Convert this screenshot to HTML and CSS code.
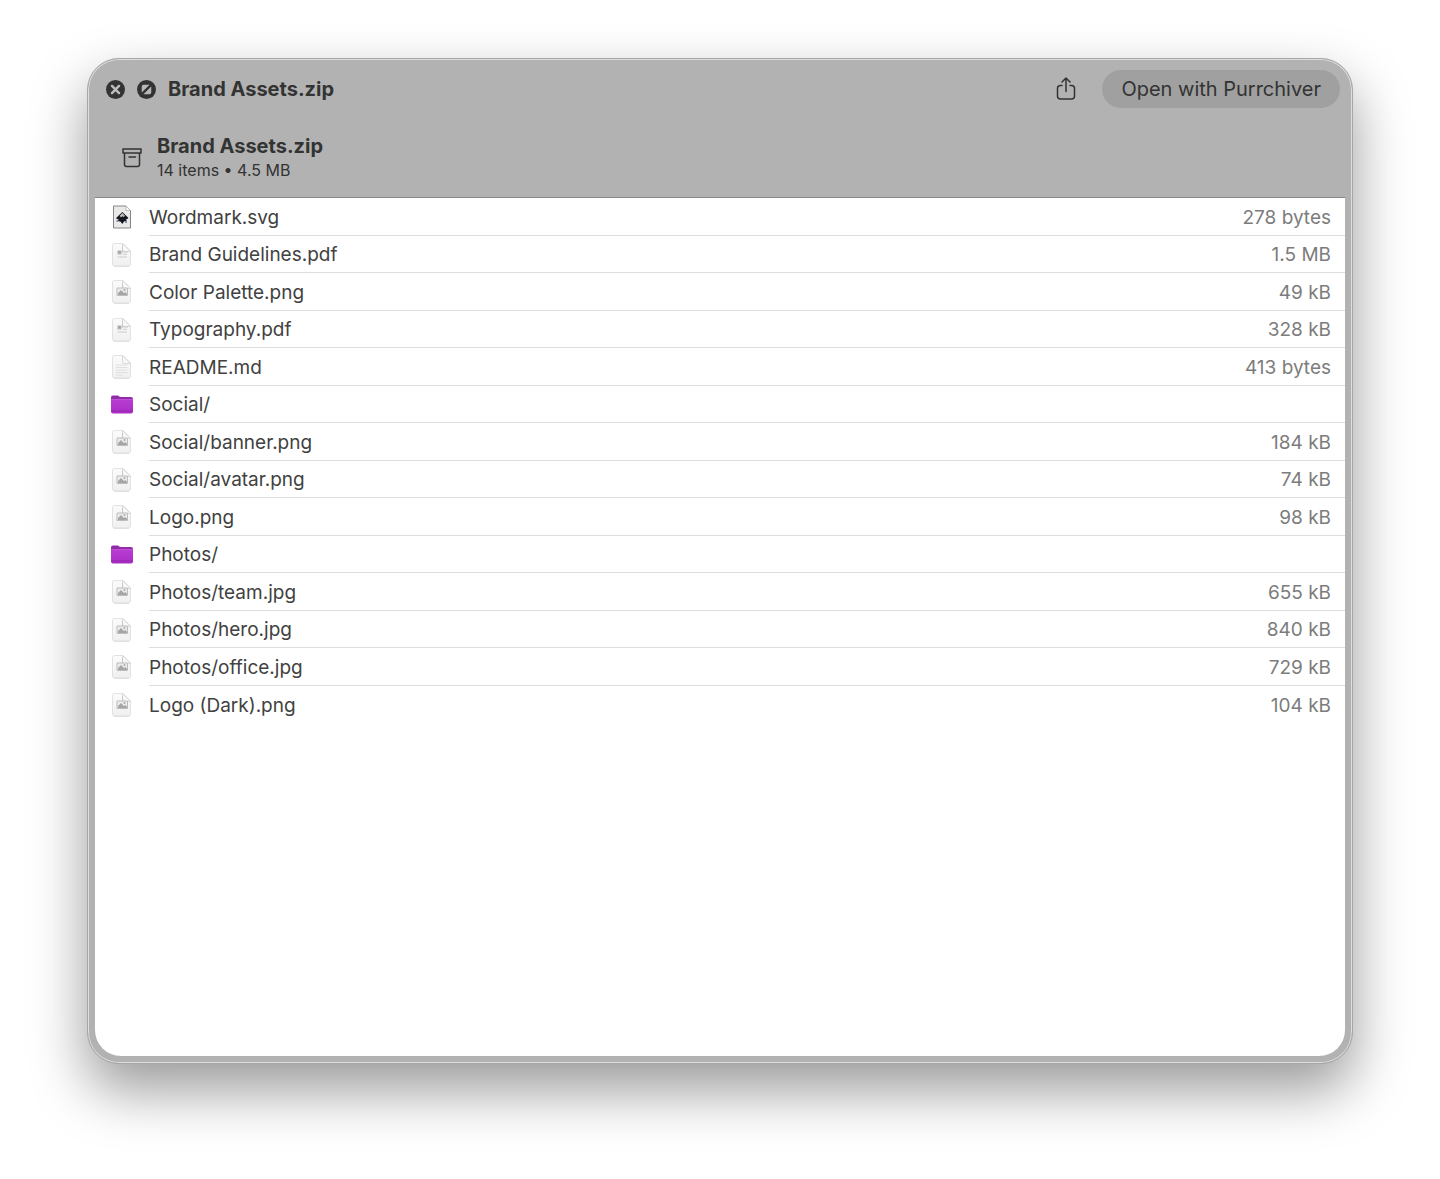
FILE: index.html
```html
<!DOCTYPE html>
<html lang="en">
<head>
<meta charset="utf-8">
<meta name="viewport" content="width=device-width, initial-scale=1">
<title>Brand Assets.zip</title>
<link rel="stylesheet" href="styles.css">
</head>
<body>
<svg class="symbols" aria-hidden="true">
  <defs>
    <linearGradient id="paper" x1="0" y1="0" x2="0" y2="1"><stop offset="0" stop-color="#fbfbfb"/><stop offset="1" stop-color="#f0f0f0"/></linearGradient>
    <linearGradient id="purple" x1="0" y1="0" x2="0" y2="1"><stop offset="0" stop-color="#b93dd3"/><stop offset="1" stop-color="#a92cc4"/></linearGradient>
    <symbol id="page" viewBox="0 0 24 26">
      <path d="M4.500 1.500h8.500l7.500 7.500v13a2 2 0 0 1-2 2h-14a2 2 0 0 1-2-2v-18.500a2 2 0 0 1 2-2z" fill="url(#paper)" stroke="#e2e2e2"/>
      <path d="M12.500 1.500v6a2 2 0 0 0 2 2h6z" fill="#f8f8f8" stroke="#d8d8d8"/>
      <path d="M4 24.300h15" stroke="#d4d4d4" stroke-width=".7"/>
    </symbol>
    <symbol id="pdf" viewBox="0 0 24 26">
      <use href="#page"/>
      <path d="M7.500 8.500h4v4h-4z" fill="#b5b5b5"/>
      <path d="M12.500 4v6.500M12 10h6M13 12.300h4M7.500 15h9.500" stroke="#cacaca" fill="none"/>
      <path d="M8.500 10h2" stroke="#929292"/>
    </symbol>
    <symbol id="image" viewBox="0 0 24 26">
      <use href="#page"/>
      <path d="M12.500 4v5" stroke="#c8c8c8"/>
      <path d="M7 9h10.500v7.500h-10.500z" fill="#ececec" stroke="#bcbcbc"/>
      <path d="M8 16v-2l3-3 3 3 1.500-1 1.500 2v1z" fill="#a6a6a6"/>
      <circle cx="14.500" cy="11" r="1" fill="#aaa"/>
    </symbol>
    <symbol id="text" viewBox="0 0 24 26">
      <use href="#page"/>
      <path d="M6 11h11.500M6 13.500h11.500M6 16h11.500M6 18.500h11.500M6 21h7" stroke="#dadada" stroke-width=".8"/>
    </symbol>
    <symbol id="vector" viewBox="0 0 24 26">
      <path d="M3.500 2h12.500l4.500 4.500v17.500h-17z" fill="#e9e9e9" stroke="#858585"/>
      <path d="M16 2v4.500h4.500z" fill="#fff" stroke="#aaa" stroke-width=".7"/>
      <path d="M12.300 8l5.700 5.500c1 1-1.300 1.800-2.300 2.100l1.300 1-3 1-1.700 2.400-1.700-2.200-3-1 1.500-1c-2-.5-3.800-1-2.500-2.200z" fill="#14171d"/>
      <path d="M9.500 12l2.800-2.900 2.800 2.900-1.600 1-1.100-.7-1.300 1z" fill="#b9bec4"/>
      <path d="M6.500 17h2M15 18h2" stroke="#263d74"/>
    </symbol>
    <symbol id="folder" viewBox="0 0 24 26">
      <path d="M1 5.500a2 2 0 0 1 2-2h5l2 1.500h11a2 2 0 0 1 2 2v4h-22z" fill="#922ba8"/>
      <path d="M1 7.500h22v12a2 2 0 0 1-2 2h-18a2 2 0 0 1-2-2z" fill="url(#purple)"/>
      <path d="M1 7.500h22" stroke="#c658da" stroke-width=".8"/>
      <path d="M1.500 19h21" stroke="#8f25a7" stroke-width=".8"/>
    </symbol>
  </defs>
</svg>
<main class="window">
  <header class="toolbar">
    <button class="round-button" type="button" aria-label="Close">
      <svg viewBox="0 0 20 20"><circle cx="10" cy="10" r="10" fill="#333"/><path d="M6.300 6.300l7.400 7.400m0-7.400l-7.400 7.400" stroke="#bdbdbd" stroke-width="2.600" stroke-linecap="round"/></svg>
    </button>
    <button class="round-button" type="button" aria-label="Full screen">
      <svg viewBox="0 0 20 20"><circle cx="10" cy="10" r="10" fill="#333"/><path d="M5 13.200v-6.200a2 2 0 0 1 2-2h6.200zM15 6.800v6.200a2 2 0 0 1-2 2h-6.200z" fill="#b8b8b8"/></svg>
    </button>
    <h1 class="title">Brand Assets.zip</h1>
    <button class="share" type="button" aria-label="Share">
      <svg viewBox="0 0 24 26"><path d="M8 9.500h-1.500a3 3 0 0 0-3 3v7.500a3 3 0 0 0 3 3h11a3 3 0 0 0 3-3v-7.500a3 3 0 0 0-3-3h-1.500M12 15.500v-13M8 6l4-4 4 4" fill="none" stroke="#333" stroke-width="1.500" stroke-linecap="round" stroke-linejoin="round"/></svg>
    </button>
    <button class="open" type="button">Open with Purrchiver</button>
  </header>
  <section class="summary">
    <svg class="archive" viewBox="0 0 22 22"><path d="M2 2h18v4h-18zM3.500 6v11.500a2 2 0 0 0 2 2h11a2 2 0 0 0 2-2v-11.500M8 10h6.500" fill="none" stroke="#333" stroke-width="1.500" stroke-linecap="round" stroke-linejoin="round"/></svg>
    <div>
      <h2 class="archive-name">Brand Assets.zip</h2>
      <p class="details">14 items • 4.5 MB</p>
    </div>
  </section>
  <section class="contents">
    <table class="files">
      <tbody>
        <tr><td class="kind"><svg><use href="#vector"/></svg></td><td>Wordmark.svg</td><td class="size">278 bytes</td></tr>
        <tr><td class="kind"><svg><use href="#pdf"/></svg></td><td>Brand Guidelines.pdf</td><td class="size">1.5 MB</td></tr>
        <tr><td class="kind"><svg><use href="#image"/></svg></td><td>Color Palette.png</td><td class="size">49 kB</td></tr>
        <tr><td class="kind"><svg><use href="#pdf"/></svg></td><td>Typography.pdf</td><td class="size">328 kB</td></tr>
        <tr><td class="kind"><svg><use href="#text"/></svg></td><td>README.md</td><td class="size">413 bytes</td></tr>
        <tr><td class="kind"><svg><use href="#folder"/></svg></td><td>Social/</td><td class="size"></td></tr>
        <tr><td class="kind"><svg><use href="#image"/></svg></td><td>Social/banner.png</td><td class="size">184 kB</td></tr>
        <tr><td class="kind"><svg><use href="#image"/></svg></td><td>Social/avatar.png</td><td class="size">74 kB</td></tr>
        <tr><td class="kind"><svg><use href="#image"/></svg></td><td>Logo.png</td><td class="size">98 kB</td></tr>
        <tr><td class="kind"><svg><use href="#folder"/></svg></td><td>Photos/</td><td class="size"></td></tr>
        <tr><td class="kind"><svg><use href="#image"/></svg></td><td>Photos/team.jpg</td><td class="size">655 kB</td></tr>
        <tr><td class="kind"><svg><use href="#image"/></svg></td><td>Photos/hero.jpg</td><td class="size">840 kB</td></tr>
        <tr><td class="kind"><svg><use href="#image"/></svg></td><td>Photos/office.jpg</td><td class="size">729 kB</td></tr>
        <tr><td class="kind"><svg><use href="#image"/></svg></td><td>Logo (Dark).png</td><td class="size">104 kB</td></tr>
      </tbody>
    </table>
  </section>
</main>
</body>
</html>
```
FILE: styles.css
```css
* { box-sizing: border-box; }

body {
  display: flex;
  min-height: 100vh;
  margin: 0;
  padding: 58px 87px 115px;
  background: #fff;
  color: #333;
  font-family: Inter, "Liberation Sans", sans-serif;
}

.symbols { position: absolute; width: 0; height: 0; }

.window {
  display: flex;
  flex: 1;
  flex-direction: column;
  min-width: 0;
  padding: 0 7px 7px;
  border: 1px solid #a6a6a6;
  border-radius: 32px;
  background: #b2b2b2;
  box-shadow: inset 0 0 0 1px #dedede, 0 26px 56px rgba(0, 0, 0, .4);
}

button { padding: 0; border: 0; background: none; color: inherit; font-family: inherit; }
svg { display: block; }
h1, h2, p { margin: 0; }

.toolbar {
  display: flex;
  align-items: center;
  height: 60px;
  padding: 0 5px 0 11px;
}

.round-button { width: 19px; height: 19px; margin-right: 12px; }
.round-button svg { width: 19px; height: 19px; }
.title, .archive-name { font-size: 20px; line-height: 24px; font-weight: 700; }
.title { flex: 1; }
.share { width: 24px; height: 26px; margin-right: 24px; }
.share svg { width: 24px; height: 26px; }

.open {
  height: 38px;
  padding: 0 19px;
  border-radius: 19px;
  background: #a0a0a0;
  font-size: 20px;
  line-height: 24px;
}

.summary {
  display: flex;
  align-items: center;
  gap: 14px;
  height: 78px;
  padding: 0 26px;
}

.archive { width: 22px; height: 22px; }
.details { font-size: 16px; line-height: 24px; }

.contents {
  flex: 1;
  border-top: 1px solid #888;
  border-radius: 0 0 26px 26px;
  background: #fff;
}

.files { width: 100%; border-collapse: separate; border-spacing: 0; }
tr { height: 38px; }
tr:nth-child(even) { height: 37px; }
td { padding: 2px 0 0; border-bottom: 1px solid #dedede; font-size: 19px; line-height: 24px; color: #414141; }
td.kind { width: 54px; padding: 0 0 0 15px; border-bottom: 0; }
td.size { padding-right: 14px; text-align: right; color: #7c7c7c; }
tr:last-child td { border-bottom: 0; }
.kind svg { width: 24px; height: 26px; }
```
